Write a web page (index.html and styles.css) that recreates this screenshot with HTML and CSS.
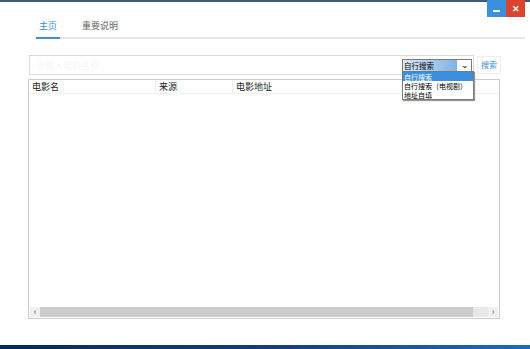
FILE: index.html
```html
<!DOCTYPE html>
<html lang="zh">
<head>
    <meta charset="UTF-8">
    <title>电影搜索</title>
    <link rel="stylesheet" href="styles.css">
</head>
<body>
    <div class="topline"></div>
    <div class="winbtns">
        <span class="btn-min"></span>
        <span class="btn-close">✕</span>
    </div>

    <div class="tabs">
        <span class="tab active">主页</span>
        <span class="tab">重要说明</span>
    </div>

    <div class="searchbar">
        <div class="inputbox">
            <span class="placeholder">请输入电影名称</span>
            <div class="selectwrap">
                <div class="select"><span class="sel-text">自行搜索</span><span class="arrow">⌄</span></div>
                <ul class="dropdown">
                    <li class="hl">自行搜索</li>
                    <li>自行搜索（电视剧）</li>
                    <li>地址自填</li>
                </ul>
            </div>
        </div>
        <a class="searchbtn">搜索</a>
    </div>

    <div class="grid">
        <div class="head">
            <span class="c1">电影名</span>
            <span class="c2">来源</span>
            <span class="c3">电影地址</span>
        </div>
        <div class="rows"></div>
        <div class="hscroll">
            <span class="sarrow">‹</span>
            <span class="thumb"></span>
            <span class="sarrow">›</span>
        </div>
    </div>

    <div class="taskbar"></div>
</body>
</html>
```

FILE: styles.css
```css
body {
    margin: 0;
    width: 530px;
    height: 349px;
    position: relative;
    overflow: hidden;
    background: #fff;
    font-family: "Noto Sans CJK SC", "Noto Sans", sans-serif;
    font-size: 9px;
    color: #333;
}
.topline {
    height: 2px;
    background: #3d5b78;
}
.winbtns {
    position: absolute;
    top: 0;
    right: 5px;
    display: flex;
}
.btn-min, .btn-close {
    width: 19px;
    height: 17px;
    display: flex;
    align-items: center;
    justify-content: center;
    color: #fff;
}
.btn-min {
    background: #3b8fdf;
}
.btn-min::after {
    content: "";
    width: 7px;
    height: 2px;
    background: #fff;
    margin-top: 5px;
}
.btn-close {
    background: #dd4430;
    font-size: 9px;
    font-weight: bold;
}
.tabs {
    display: flex;
    margin: 15px 5px 0 36px;
    border-bottom: 2px solid #e6e6e6;
    height: 20px;
}
.tab {
    padding: 1px 3px 0;
    margin-right: 19px;
    color: #666;
    line-height: 16px;
}
.tab.active {
    color: #3b8fdf;
    border-bottom: 2px solid #3b8fdf;
    margin-bottom: -2px;
}
.searchbar {
    display: flex;
    align-items: center;
    margin: 16px 0 0 29px;
    gap: 3px;
}
.inputbox {
    width: 443px;
    height: 18px;
    border: 1px solid #ddd;
    display: flex;
    align-items: center;
    justify-content: space-between;
    position: relative;
    z-index: 2;
}
.placeholder {
    color: #f6f6f6;
    margin-left: 6px;
}
.selectwrap {
    position: relative;
    margin-right: 1px;
}
.select {
    width: 68px;
    height: 11px;
    border: 1px solid #7a7a7a;
    display: flex;
    align-items: center;
    justify-content: space-between;
    background: linear-gradient(90deg, #dce8f7 0%, #7fb0e4 80%, #fff 80%);
    color: #000;
    font-size: 7.5px;
    line-height: 11px;
}
.sel-text {
    padding-left: 1px;
}
.arrow {
    width: 12px;
    text-align: center;
    font-size: 9px;
    line-height: 6px;
    background: #fff;
}
.dropdown {
    position: absolute;
    top: 12px;
    left: 0;
    margin: 0;
    padding: 0;
    list-style: none;
    width: 70px;
    border: 1px solid #7a7a7a;
    background: #fff;
    color: #000;
    font-size: 7px;
    line-height: 10px;
    box-shadow: 1px 1px 1px #999;
}
.dropdown li {
    padding-left: 1px;
    height: 9px;
    white-space: nowrap;
    overflow: hidden;
}
.dropdown li.hl {
    background: #3b8fdf;
    color: #fff;
}
.searchbtn {
    color: #3b8fdf;
    border: 1px solid #eee;
    padding: 2px 3px;
    line-height: 12px;
    font-size: 8px;
}
.grid {
    margin: 4px 0 0 28px;
    width: 470px;
    height: 238px;
    border: 1px solid #ccc;
    display: flex;
    flex-direction: column;
}
.head {
    display: flex;
    height: 13px;
    line-height: 13px;
    border-bottom: 1px solid #f0f0f0;
    color: #222;
}
.head span {
    padding-left: 3px;
    border-right: 1px solid #eee;
}
.c1 { width: 123px; }
.c2 { width: 73px; }
.c3 { flex: 1; border-right: none !important; }
.rows {
    flex: 1;
}
.hscroll {
    display: flex;
    height: 10px;
    margin: 0 1px 1px;
    background: #e8e8e8;
}
.sarrow {
    width: 10px;
    font-size: 9px;
    line-height: 9px;
    text-align: center;
    color: #555;
    background: #f0f0f0;
}
.thumb {
    flex: 1;
    background: #cdcdcd;
    margin-right: 15px;
}
.taskbar {
    position: absolute;
    left: 0;
    bottom: 0;
    width: 100%;
    height: 4px;
    background: linear-gradient(90deg, #0a2a55, #163e73 50%, #1e6bb8);
}
```
